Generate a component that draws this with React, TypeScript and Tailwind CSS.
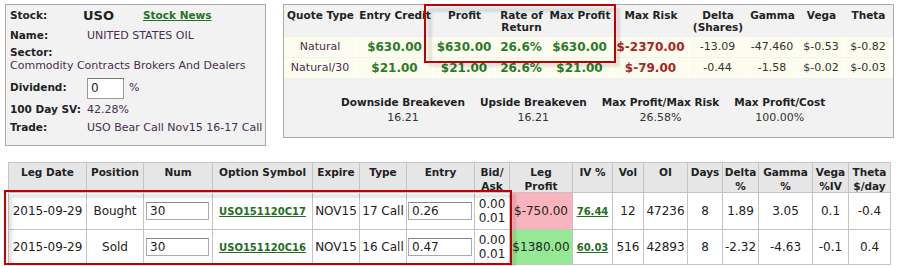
import type { ReactNode } from 'react';

const quoteCols = [
    { w: 'w-[73px]', head: ['Quote Type'] },
    { w: 'w-[76px]', head: ['Entry Credit'] },
    { w: 'w-[63px]', head: ['Profit'] },
    { w: 'w-[51px]', head: ['Rate of', 'Return'] },
    { w: 'w-[66px]', head: ['Max Profit'] },
    { w: 'w-[76px]', head: ['Max Risk'] },
    { w: 'w-[58px]', head: ['Delta', '(Shares)'] },
    { w: 'w-[51px]', head: ['Gamma'] },
    { w: 'w-[47px]', head: ['Vega'] },
    { w: 'w-[47px]', head: ['Theta'] },
];

type Tone = 'name' | 'green' | 'red' | 'plain';

const quoteRows: [string, Tone][][] = [
    [
        ['Natural', 'name'],
        ['$630.00', 'green'],
        ['$630.00', 'green'],
        ['26.6%', 'green'],
        ['$630.00', 'green'],
        ['$-2370.00', 'red'],
        ['-13.09', 'plain'],
        ['-47.460', 'plain'],
        ['$-0.53', 'plain'],
        ['$-0.82', 'plain'],
    ],
    [
        ['Natural/30', 'name'],
        ['$21.00', 'green'],
        ['$21.00', 'green'],
        ['26.6%', 'green'],
        ['$21.00', 'green'],
        ['$-79.00', 'red'],
        ['-0.44', 'plain'],
        ['-1.58', 'plain'],
        ['$-0.02', 'plain'],
        ['$-0.03', 'plain'],
    ],
];

const toneClass: Record<Tone, string> = {
    name: 'text-[11px] text-[#4a2c52]',
    green: 'text-[12px] font-bold text-[#2a7a2a]',
    red: 'text-[12px] font-bold text-[#a82424]',
    plain: 'text-[11px] text-[#333]',
};

const breakevens = [
    ['Downside Breakeven', '16.21'],
    ['Upside Breakeven', '16.21'],
    ['Max Profit/Max Risk', '26.58%'],
    ['Max Profit/Cost', '100.00%'],
];

const legHeads = [
    ['Leg Date'],
    ['Position'],
    ['Num'],
    ['Option Symbol'],
    ['Expire'],
    ['Type'],
    ['Entry'],
    ['Bid/', 'Ask'],
    ['Leg', 'Profit'],
    ['IV %'],
    ['Vol'],
    ['OI'],
    ['Days'],
    ['Delta', '%'],
    ['Gamma', '%'],
    ['Vega', '%IV'],
    ['Theta', '$/day'],
];

const legs = [
    {
        date: '2015-09-29',
        position: 'Bought',
        num: '30',
        symbol: 'USO151120C17',
        expire: 'NOV15',
        type: '17 Call',
        entry: '0.26',
        profit: '$-750.00',
        profitBg: 'bg-[#f9b4bd]',
        iv: '76.44',
        vol: '12',
        oi: '47236',
        days: '8',
        delta: '1.89',
        gamma: '3.05',
        vega: '0.1',
        theta: '-0.4',
        h: 'h-[36px]',
    },
    {
        date: '2015-09-29',
        position: 'Sold',
        num: '30',
        symbol: 'USO151120C16',
        expire: 'NOV15',
        type: '16 Call',
        entry: '0.47',
        profit: '$1380.00',
        profitBg: 'bg-[#94ea94]',
        iv: '60.03',
        vol: '516',
        oi: '42893',
        days: '8',
        delta: '-2.32',
        gamma: '-4.63',
        vega: '-0.1',
        theta: '0.4',
        h: 'h-[34px]',
    },
];

function Row({ label, children, className = 'h-[18px]' }: { label: string; children: ReactNode; className?: string }) {
    return (
        <div className={`flex items-center ${className}`}>
            <span className="w-[77px] shrink-0 whitespace-nowrap text-[10.5px] font-bold text-[#222]">{label}</span>
            {children}
        </div>
    );
}

function StockBox() {
    return (
        <div className="w-[261px] h-[142px] shrink-0 border border-[#aaa] bg-[#f2f2f2] pl-[4px]">
            <div className="flex items-center h-[22px]">
                <span className="w-[73px] text-[10.5px] font-bold text-[#222]">Stock:</span>
                <span className="text-[13px] font-bold text-[#222]">USO</span>
                <span className="ml-[29px] text-[10.5px] font-bold text-[#267326] underline">Stock News</span>
            </div>
            <Row label="Name:">
                <span className="text-[11px] text-[#4a2c52]">UNITED STATES OIL</span>
            </Row>
            <div className="h-[14px] leading-[14px] text-[10.5px] font-bold text-[#222]">Sector:</div>
            <div className="h-[14px] leading-[14px] text-[11px] text-[#4a2c52] whitespace-nowrap">
                Commodity Contracts Brokers And Dealers
            </div>
            <Row label="Dividend:" className="mt-[4px] h-[22px]">
                <input
                    defaultValue="0"
                    className="w-[37px] h-[21px] border border-[#999] border-t-[#777] bg-white pl-[3px] text-[12px] text-[#222] outline-none"
                />
                <span className="ml-[5px] text-[11px] text-[#4a2c52]">%</span>
            </Row>
            <Row label="100 Day SV:" className="mt-[2px] h-[18px]">
                <span className="text-[11px] text-[#4a2c52]">42.28%</span>
            </Row>
            <Row label="Trade:">
                <span className="text-[11px] text-[#4a2c52] whitespace-nowrap">USO Bear Call Nov15 16-17 Call</span>
            </Row>
        </div>
    );
}

function QuoteBox() {
    return (
        <div className="ml-[17px] w-[611px] h-[134px] shrink-0 border border-[#aaa] bg-[#f2f2f2]">
            <div className="flex h-[32px] pt-[4px]">
                {quoteCols.map((c, i) => (
                    <div key={i} className={`${c.w} shrink-0 text-center text-[10.5px] leading-[12px] font-bold text-[#222] whitespace-nowrap`}>
                        {c.head.map((l) => (
                            <div key={l}>{l}</div>
                        ))}
                    </div>
                ))}
            </div>
            {quoteRows.map((row, r) => (
                <div key={r} className={`flex h-[20px] bg-[#fdfdef] ${r === 1 ? 'mt-px' : ''}`}>
                    {row.map(([text, tone], i) => (
                        <div
                            key={i}
                            className={`${quoteCols[i].w} shrink-0 flex items-center justify-center border-r border-white whitespace-nowrap ${toneClass[tone]}`}
                        >
                            {text}
                        </div>
                    ))}
                </div>
            ))}
            <div className="flex gap-[15px] pl-[57px] mt-[16px]">
                {breakevens.map(([label, value]) => (
                    <div key={label} className="flex flex-col items-center leading-[16px]">
                        <span className="text-[10.5px] font-bold text-[#222] whitespace-nowrap">{label}</span>
                        <span className="text-[11px] text-[#333]">{value}</span>
                    </div>
                ))}
            </div>
        </div>
    );
}

const plain = 'bg-white text-[12px] text-[#222]';
const link = 'bg-white text-[10px] font-bold text-[#1f6f1f] underline';

function Cell({ children, look = plain, className = '' }: { children: ReactNode; look?: string; className?: string }) {
    return (
        <div className={`flex items-center justify-center whitespace-nowrap ${look} ${className}`}>
            {children}
        </div>
    );
}

function LegsTable() {
    return (
        <div className="ml-[8px] mt-[16px] w-[883px] bg-[#c4c4c4] p-px grid gap-px grid-cols-[77px_56px_68px_99px_46px_46px_67px_34px_62px_39px_30px_43px_34px_35px_53px_35px_41px]">
            {legHeads.map((lines, i) => (
                <div key={i} className="h-[29px] bg-[#e6e6e6] pt-[2px] text-center text-[10.5px] leading-[14px] font-bold text-[#222] whitespace-nowrap">
                    {lines.map((l) => (
                        <div key={l}>{l}</div>
                    ))}
                </div>
            ))}
            {legs.map((leg) => [
                <Cell key={leg.symbol + 'd'} className={leg.h}>{leg.date}</Cell>,
                <Cell key={leg.symbol + 'p'}>{leg.position}</Cell>,
                <Cell key={leg.symbol + 'n'} className="justify-start pl-[2px]">
                    <input
                        defaultValue={leg.num}
                        className="w-[63px] h-[18px] border border-[#aaa] border-t-[#888] bg-white pl-[3px] text-[12px] text-[#222] outline-none"
                    />
                </Cell>,
                <Cell key={leg.symbol + 's'} look={link}>{leg.symbol}</Cell>,
                <Cell key={leg.symbol + 'e'}>{leg.expire}</Cell>,
                <Cell key={leg.symbol + 't'}>{leg.type}</Cell>,
                <Cell key={leg.symbol + 'en'} className="justify-start pl-px">
                    <input
                        defaultValue={leg.entry}
                        className="w-[64px] h-[18px] border border-[#aaa] border-t-[#888] bg-white pl-[3px] text-[12px] text-[#222] outline-none"
                    />
                </Cell>,
                <Cell key={leg.symbol + 'b'} className="flex-col leading-[14px]">
                    <span>0.00</span>
                    <span>0.01</span>
                </Cell>,
                <Cell key={leg.symbol + 'lp'} look={`${leg.profitBg} text-[12px] text-[#222]`}>{leg.profit}</Cell>,
                <Cell key={leg.symbol + 'iv'} look={link}>{leg.iv}</Cell>,
                <Cell key={leg.symbol + 'v'}>{leg.vol}</Cell>,
                <Cell key={leg.symbol + 'oi'}>{leg.oi}</Cell>,
                <Cell key={leg.symbol + 'dy'}>{leg.days}</Cell>,
                <Cell key={leg.symbol + 'dl'}>{leg.delta}</Cell>,
                <Cell key={leg.symbol + 'g'}>{leg.gamma}</Cell>,
                <Cell key={leg.symbol + 'vg'}>{leg.vega}</Cell>,
                <Cell key={leg.symbol + 'th'}>{leg.theta}</Cell>,
            ])}
        </div>
    );
}

function Highlight({ className }: { className: string }) {
    return (
        <div className={`absolute pointer-events-none ${className}`}>
            <div className="absolute left-[4px] top-[4px] w-full h-full border-[4px] border-black/10 blur-[1px]" />
            <div className="absolute inset-0 border-2 border-[#c00000]" />
        </div>
    );
}

export default function App() {
    return (
        <div className="relative w-[900px] h-[266px] overflow-hidden bg-white font-['DejaVu_Sans',sans-serif] text-[#222]">
            <div className="flex items-start pt-[4px] pl-[5px]">
                <StockBox />
                <QuoteBox />
            </div>
            <LegsTable />

            {/* annotation frames drawn over the screenshot */}
            <Highlight className="left-[424px] top-[4px] w-[192px] h-[59px]" />
            <Highlight className="left-[4px] top-[190px] w-[508px] h-[75px]" />
        </div>
    );
}
